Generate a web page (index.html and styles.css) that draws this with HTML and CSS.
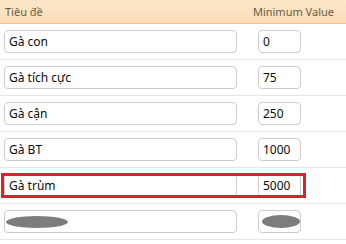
FILE: index.html
```html
<!DOCTYPE html>
<html lang="vi">
<head>
    <meta charset="UTF-8">
    <title>Minimum Value</title>
    <link rel="stylesheet" href="styles.css">
</head>
<body>

<div class="head">
    <span>Tiêu đề</span>
    <span>Minimum Value</span>
</div>

<div class="row">
    <div class="fields">
        <input class="name" type="text" value="Gà con">
        <input class="value" type="text" value="0">
    </div>
</div>
<div class="row">
    <div class="fields">
        <input class="name" type="text" value="Gà tích cực">
        <input class="value" type="text" value="75">
    </div>
</div>
<div class="row">
    <div class="fields">
        <input class="name" type="text" value="Gà cận">
        <input class="value" type="text" value="250">
    </div>
</div>
<div class="row">
    <div class="fields">
        <input class="name" type="text" value="Gà BT">
        <input class="value" type="text" value="1000">
    </div>
</div>
<div class="row">
    <div class="fields marked">
        <input class="name" type="text" value="Gà trùm">
        <input class="value" type="text" value="5000">
    </div>
</div>
<div class="row">
    <div class="fields">
        <div class="name box"><span class="blot blot-long"></span></div>
        <div class="value box"><span class="blot blot-short"></span></div>
    </div>
</div>

</body>
</html>
```

FILE: styles.css
```css
body { margin: 0; background: #fff; font-family: "Noto Sans", "Open Sans", sans-serif; overflow: hidden; }

.head {
    height: 23px;
    display: flex;
    justify-content: space-between;
    align-items: center;
    padding: 0 12px 0 5px;
    background: linear-gradient(#fde7cb, #fbdcb5);
    border-bottom: 1px solid #efc18c;
    font-size: 11px;
    color: #6a5a48;
}

.row {
    padding: 6px 0 6px 4px;
    border-bottom: 1px solid #dfe7ef;
}

.fields {
    display: flex;
    gap: 21px;
    width: 297px;
    position: relative;
}

.fields input, .box {
    height: 23px;
    box-sizing: border-box;
    border: 1px solid #cccccc;
    border-radius: 4px;
    padding: 0 4px;
    font-family: "Noto Sans", "Open Sans", sans-serif;
    font-size: 12px;
    color: #0c0c0c;
    background: #fff;
    margin: 0;
}
.fields .name { width: 235px; }
.fields .value { width: 43px; }

/* red annotation frame */
.marked::after {
    content: "";
    position: absolute;
    left: -3px;
    right: -5px;
    top: -1px;
    bottom: -1px;
    border: 3px solid #d9222d;
}

.box { display: flex; align-items: center; padding: 0; }
.blot {
    display: block;
    height: 12px;
    background: #7d7d7d;
    border-radius: 50%;
    filter: blur(0.6px);
}
.blot-long { width: 62px; margin-left: 1px; }
.blot-short { width: 39px; height: 13px; margin-left: 3px; }
```
